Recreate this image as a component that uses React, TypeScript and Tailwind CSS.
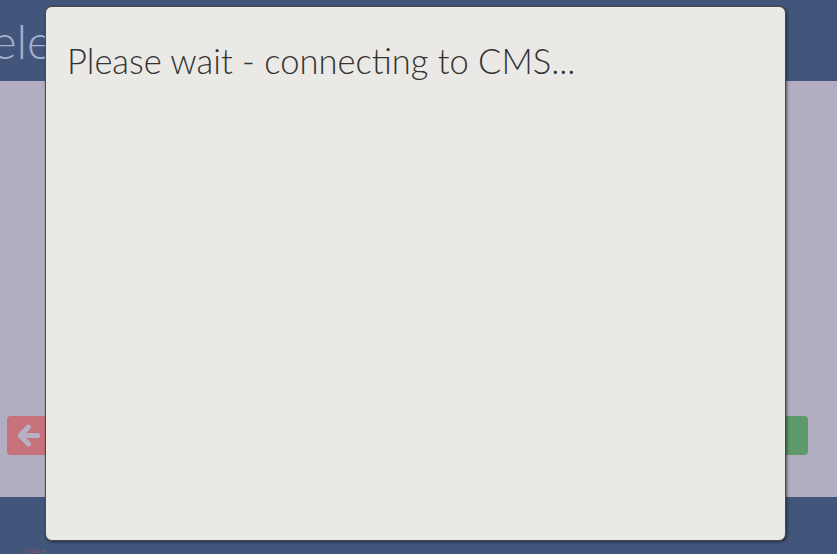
import React from 'react';

const App: React.FC = () => {
  return (
    <div className="relative w-[837px] h-[554px] overflow-hidden bg-[#b2adc1]" style={{ fontFamily: 'Lato, "Open Sans", sans-serif' }}>
      <div className="h-[81px] bg-[#42557a] flex items-center overflow-hidden">
        <h1 className="ml-[-34px] text-[48px] font-light text-[#a3b2d2] leading-none whitespace-nowrap">Select</h1>
      </div>
      <div className="h-[416px] flex flex-col justify-end pb-[42px] px-[7px]">
        <div className="flex justify-between">
          <button className="h-[39px] w-[60px] rounded bg-[#c7727a] flex items-center pl-[8px]">
            <svg width="27" height="27" viewBox="0 0 24 24" fill="none" stroke="#b7b1c6" strokeWidth="4.5" strokeLinecap="round" strokeLinejoin="round">
              <path d="M20 12H5M12 4.5l-7.5 7.5 7.5 7.5" />
            </svg>
          </button>
          <button className="h-[39px] w-[60px] mr-[22px] rounded bg-[#5e9a6a]" />
        </div>
      </div>
      <div className="h-[57px] bg-[#42557a] pl-[24px] pt-[42px] leading-none">
        <span className="text-[6px] text-[#a0505a] leading-none">© 2014</span>
      </div>
      <div className="absolute left-[45px] top-[6px] w-[741px] h-[535px] rounded-[7px] border border-[#4a4a4a] bg-[#ebe9e5] shadow-[1px_1px_3px_rgba(0,0,0,0.5)] px-[21px] pt-[32px]">
        <p className="text-[34.5px] font-light text-[#333333] leading-[44px]">Please wait - connecting to CMS...</p>
      </div>
    </div>
  );
};

export default App;
